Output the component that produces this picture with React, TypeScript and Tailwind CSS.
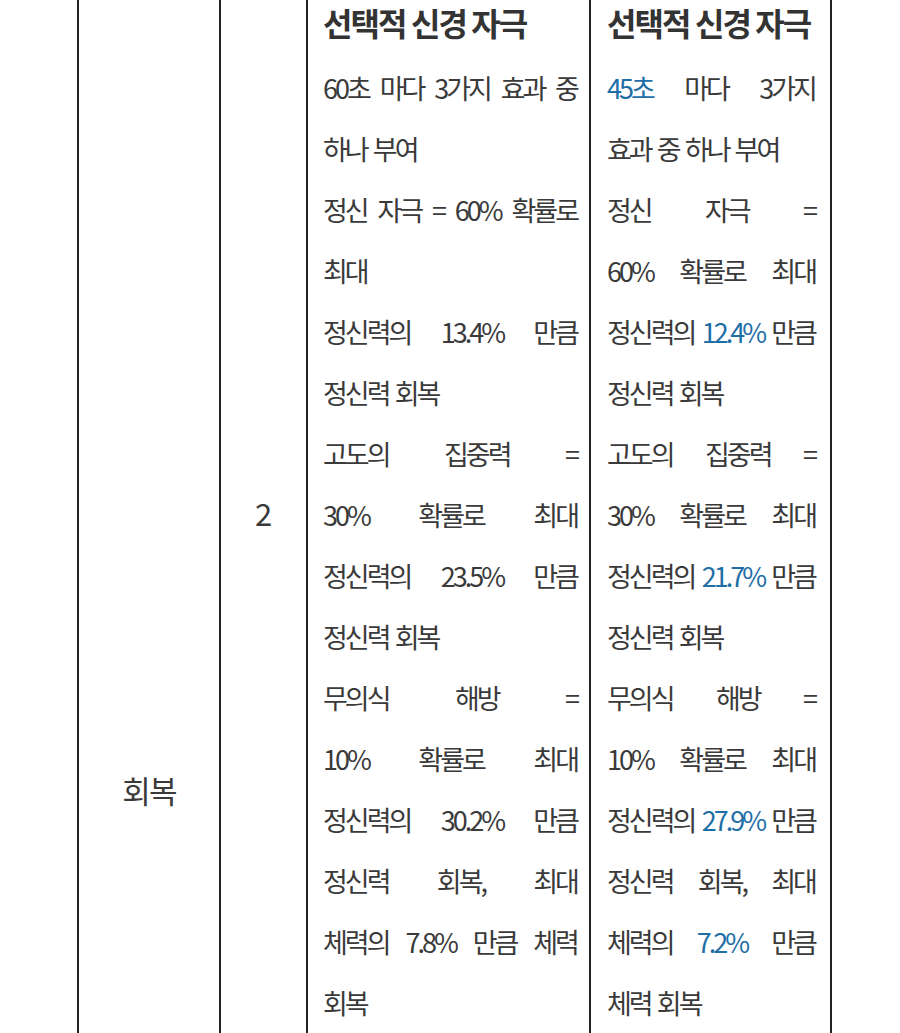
import React from "react";

type Seg = string | { b: string };
type Line = { segs: Seg[]; justify?: boolean };

const blue = "text-[#1f6ea6]";

function Row({ line }: { line: Line }) {
  return (
    <div
      className={
        "h-[61px] leading-[61px] whitespace-nowrap " +
        (line.justify ? "text-justify [text-align-last:justify]" : "text-left [word-spacing:3px]")
      }
    >
      {line.segs.map((s, i) =>
        typeof s === "string" ? (
          <span key={i}>{s}</span>
        ) : (
          <span key={i} className={blue}>
            {s.b}
          </span>
        )
      )}
    </div>
  );
}

const before: Line[] = [
  { segs: ["60초 마다 3가지 효과 중"], justify: true },
  { segs: ["하나 부여"] },
  { segs: ["정신 자극 = 60% 확률로"], justify: true },
  { segs: ["최대"] },
  { segs: ["정신력의 13.4% 만큼"], justify: true },
  { segs: ["정신력 회복"] },
  { segs: ["고도의 집중력 ="], justify: true },
  { segs: ["30% 확률로 최대"], justify: true },
  { segs: ["정신력의 23.5% 만큼"], justify: true },
  { segs: ["정신력 회복"] },
  { segs: ["무의식 해방 ="], justify: true },
  { segs: ["10% 확률로 최대"], justify: true },
  { segs: ["정신력의 30.2% 만큼"], justify: true },
  { segs: ["정신력 회복, 최대"], justify: true },
  { segs: ["체력의 7.8% 만큼 체력"], justify: true },
  { segs: ["회복"] },
];

const after: Line[] = [
  { segs: [{ b: "45초" }, " 마다 3가지"], justify: true },
  { segs: ["효과 중 하나 부여"] },
  { segs: ["정신 자극 ="], justify: true },
  { segs: ["60% 확률로 최대"], justify: true },
  { segs: ["정신력의 ", { b: "12.4%" }, " 만큼"], justify: true },
  { segs: ["정신력 회복"] },
  { segs: ["고도의 집중력 ="], justify: true },
  { segs: ["30% 확률로 최대"], justify: true },
  { segs: ["정신력의 ", { b: "21.7%" }, " 만큼"], justify: true },
  { segs: ["정신력 회복"] },
  { segs: ["무의식 해방 ="], justify: true },
  { segs: ["10% 확률로 최대"], justify: true },
  { segs: ["정신력의 ", { b: "27.9%" }, " 만큼"], justify: true },
  { segs: ["정신력 회복, 최대"], justify: true },
  { segs: ["체력의 ", { b: "7.2%" }, " 만큼"], justify: true },
  { segs: ["체력 회복"] },
];

function SkillCell({ lines, className }: { lines: Line[]; className: string }) {
  return (
    <div className={"shrink-0 border-l-2 border-[#222] " + className}>
      <div className="h-[44px] leading-[44px] text-[32px] font-bold tracking-[-0.06em] text-[#333] whitespace-nowrap">
        선택적 신경 자극
      </div>
      <div className="mt-[13px]">
        {lines.map((l, i) => (
          <Row key={i} line={l} />
        ))}
      </div>
    </div>
  );
}

export default function App() {
  return (
    <div
      className="h-[1033px] w-[900px] overflow-hidden bg-white text-[27px] tracking-[-0.11em] text-[#3a3a3a]"
      style={{ fontFamily: '"Noto Sans CJK KR", "Noto Sans", sans-serif' }}
    >
      <div className="ml-[77px] flex items-start">
        <div className="flex h-[1580px] w-[142px] shrink-0 items-center justify-center border-l-2 border-[#222] text-[31px] tracking-[-0.06em]">
          회복
        </div>
        <div className="flex h-[1033px] w-[87px] shrink-0 items-center justify-center border-l-2 border-[#222] pb-[6px] text-[31px] tracking-normal">
          2
        </div>
        <SkillCell lines={before} className="h-[1580px] w-[283px] pl-[15px] pr-[12px]" />
        <SkillCell lines={after} className="h-[1580px] w-[243px] border-r-2 pl-[16px] pr-[15px]" />
      </div>
    </div>
  );
}
